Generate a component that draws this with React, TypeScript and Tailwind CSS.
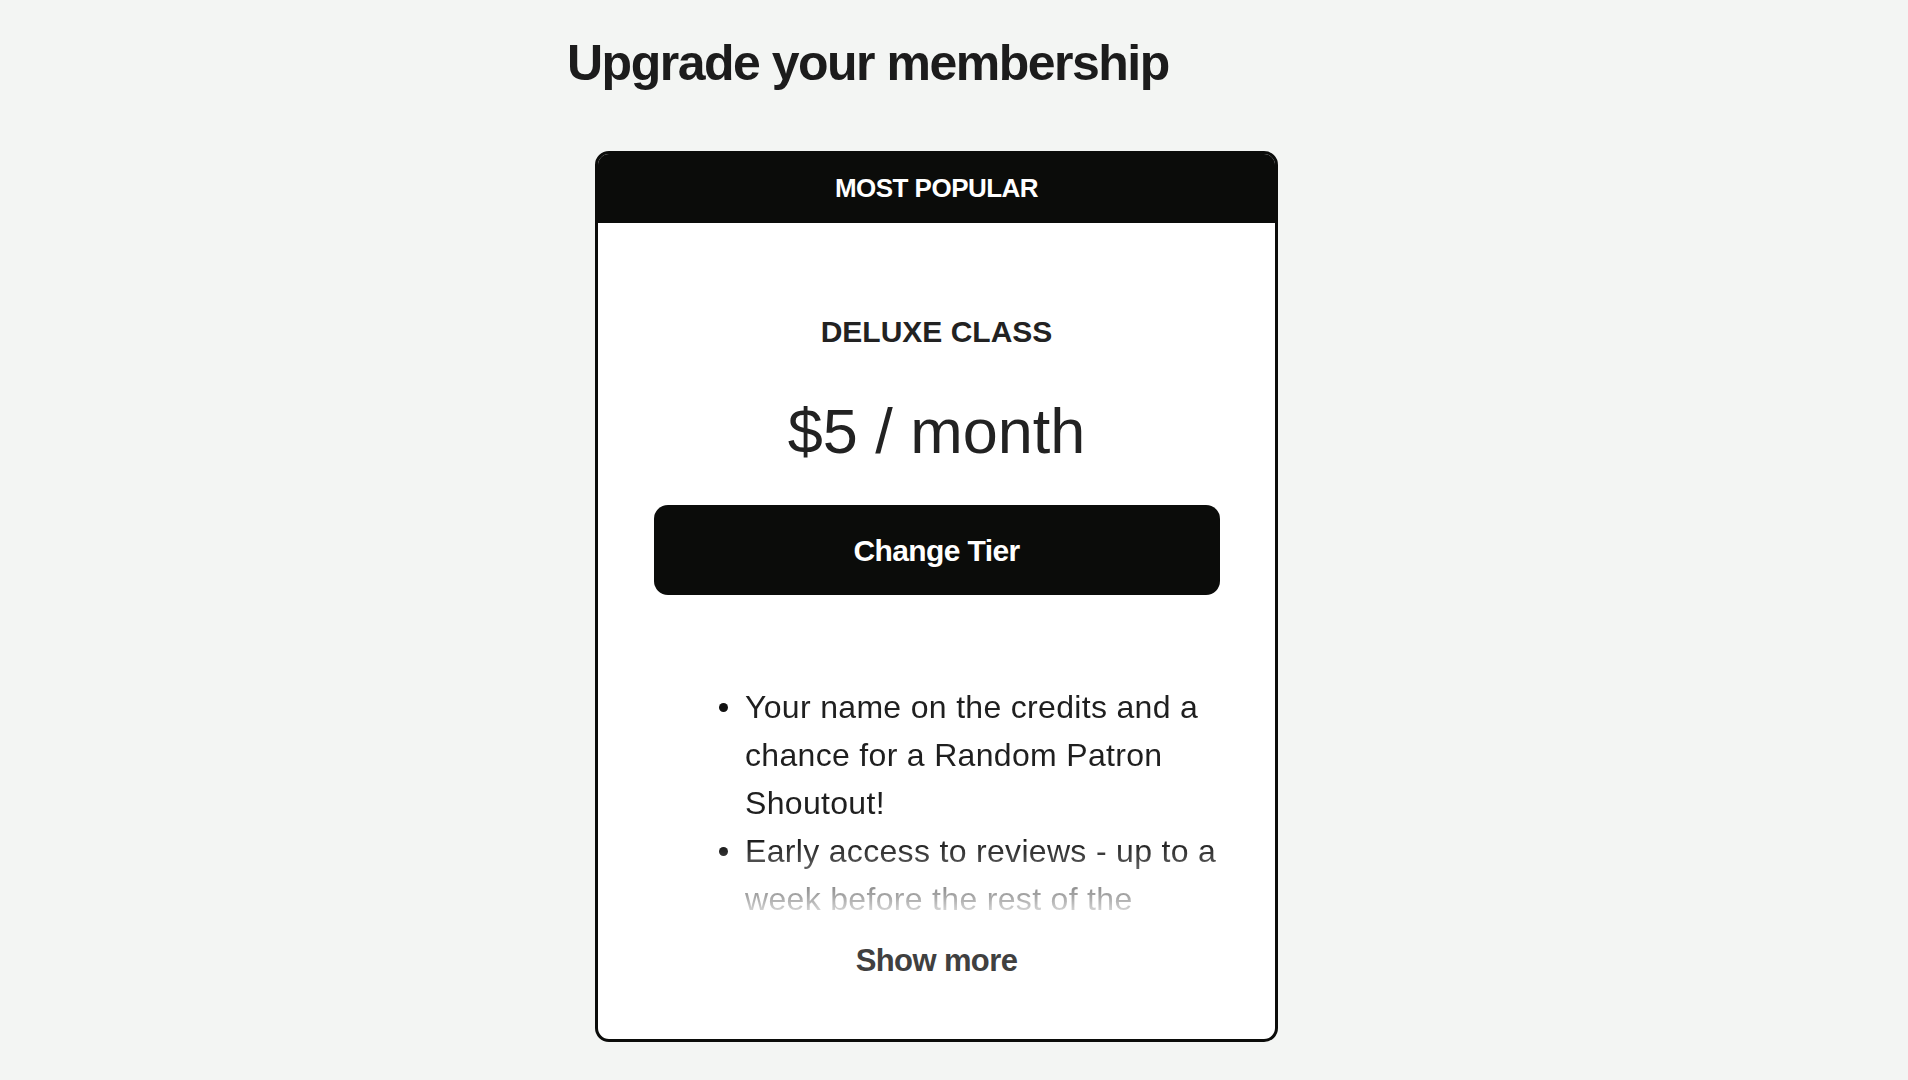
const benefits = [
  "Your name on the credits and a chance for a Random Patron Shoutout!",
  "Early access to reviews - up to a week before the rest of the internet.",
  "Exclusive behind the scenes posts and monthly patron-only updates.",
];

export default function App() {
  return (
    <div className="min-h-screen bg-[#f3f5f3] font-['Liberation_Sans',Arial,sans-serif] text-[#1c1c1c]">
      <div className="mx-auto w-[774px] pt-[33px] pb-10">
        <h1 className="text-[50px] leading-[60px] font-semibold tracking-[-0.03em]">
          Upgrade your membership
        </h1>

        <div className="ml-[28px] mt-[58px] w-[683px] overflow-hidden rounded-[14px] border-[3px] border-[#0b0c0a] bg-white">
          <div className="flex h-[69px] items-center justify-center bg-[#0b0c0a]">
            <span className="text-[26px] font-bold tracking-[-0.02em] text-white">
              MOST POPULAR
            </span>
          </div>

          <div className="flex flex-col items-center pt-[91px] pb-[60px]">
            <h2 className="text-[30px] leading-[36px] font-bold text-[#222]">
              DELUXE CLASS
            </h2>
            <p className="mt-[45px] text-[63px] leading-[72px] text-[#222]">
              $5 / month
            </p>
            <button
              type="button"
              className="mt-[38px] h-[90px] w-[566px] rounded-[14px] bg-[#0b0c0a] text-[30px] font-bold tracking-[-0.02em] text-white"
            >
              Change Tier
            </button>

            <div className="mt-[88px] h-[242px] w-full overflow-hidden pl-[121px] pr-[56px] [mask-image:linear-gradient(to_bottom,black_66%,rgba(0,0,0,0.4)_88%,transparent_100%)]">
              <ul className="flex flex-col">
                {benefits.map((item) => (
                  <li key={item} className="flex items-start">
                    <span className="mt-[20px] h-[9px] w-[9px] flex-shrink-0 rounded-full bg-[#111]" />
                    <span className="ml-[17px] text-[32px] leading-[48px] tracking-[0.01em] text-[#1f1f1f]">
                      {item}
                    </span>
                  </li>
                ))}
              </ul>
            </div>

            <button
              type="button"
              className="mt-[18px] text-[31px] leading-[36px] font-bold tracking-[-0.02em] text-[#404040]"
            >
              Show more
            </button>
          </div>
        </div>
      </div>
    </div>
  );
}
